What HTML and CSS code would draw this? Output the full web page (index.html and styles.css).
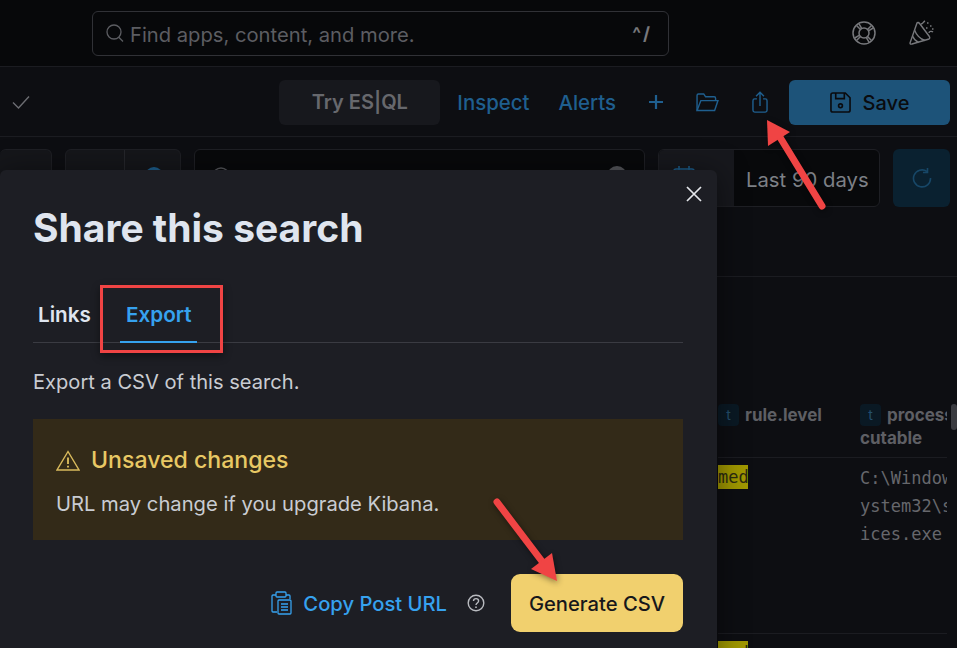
FILE: index.html
```html
<!DOCTYPE html>
<html lang="en">
<head>
  <meta charset="UTF-8">
  <title>Share this search</title>
  <link rel="stylesheet" href="styles.css">
</head>
<body>
  <!-- Global header -->
  <header class="topbar">
    <div class="global-search">
      <svg class="search-icon" width="20" height="20" viewBox="0 0 20 20" fill="none" stroke="currentColor" stroke-width="1.3"><circle cx="9" cy="9" r="7"/><path d="M13.8 14.2 L18 18.5"/></svg>
      <span class="search-hint">Find apps, content, and more.</span>
      <span class="shortcut">^/</span>
    </div>
    <div class="top-icons">
      <svg width="26" height="26" viewBox="0 0 26 26" fill="none" stroke="currentColor" stroke-width="1.5"><circle cx="13" cy="13" r="11"/><circle cx="13" cy="13" r="5"/><path d="M5.5 5.5 L9.5 9.5 M8 3.8 L10.8 8.6 M20.5 5.5 L16.5 9.5 M22.2 8 L17.4 10.8 M5.5 20.5 L9.5 16.5 M3.8 18 L8.6 15.2 M20.5 20.5 L16.5 16.5 M18 22.2 L15.2 17.4"/></svg>
      <svg width="26" height="26" viewBox="0 0 26 26" fill="none" stroke="currentColor" stroke-width="1.4"><path d="M9 3 L2 23 Q2 24.5 4 24 L21 19 Q22.5 18 21 16 L12 4 Q10 1.5 9 3 Z"/><path d="M6.5 10 C8 14 12 19 17 20.5 M4.5 16 C5.5 18.5 7.5 21 10.5 22.5"/><path d="M13 4 C15 4 15 2 17 1 M21 13 C21 11 24 11 25 12"/><path d="M19 3 h1.5 M22 6 h1.5 M18 8 h1.5 M24 9 h1.5" stroke-width="1.6"/></svg>
    </div>
  </header>

  <!-- App toolbar -->
  <div class="toolbar">
    <svg class="check" width="20" height="16" viewBox="0 0 20 16" fill="none" stroke="currentColor" stroke-width="1.4"><path d="M2 8.5 L7.5 14 L18 2.5"/></svg>
    <div class="toolbar-right">
      <button class="try-btn">Try ES|QL</button>
      <span class="tool-link link-inspect">Inspect</span>
      <span class="tool-link link-alerts">Alerts</span>
      <svg class="tool-icon icon-plus" width="16" height="16" viewBox="0 0 16 16" fill="none" stroke="currentColor" stroke-width="2.2"><path d="M8 1 V15 M1 8 H15"/></svg>
      <svg class="tool-icon icon-folder" width="23" height="19" viewBox="0 0 24 20" fill="none" stroke="currentColor" stroke-width="1.5"><path d="M1 18.5 V2.5 Q1 1 2.5 1 H8 L10 4 H19 Q20.5 4 20.5 5.5 V8"/><path d="M1 18.5 L5 8 H23 L19.5 18.5 Z"/></svg>
      <svg class="tool-icon icon-share" width="16" height="22" viewBox="0 0 18 25" fill="none" stroke="currentColor" stroke-width="1.6"><path d="M5.5 9 H3 Q1 9 1 11 V22 Q1 24 3 24 H15 Q17 24 17 22 V11 Q17 9 15 9 H12.5"/><path d="M9 17 V1.5 M4.5 6 L9 1.5 L13.5 6"/></svg>
      <button class="save-btn">
        <svg width="21" height="21" viewBox="0 0 22 22" fill="none" stroke="currentColor" stroke-width="1.7"><path d="M1 3 Q1 1 3 1 H16 L21 6 V19 Q21 21 19 21 H3 Q1 21 1 19 Z"/><path d="M6 1 V7 H15 V1"/><circle cx="11" cy="14.5" r="2"/></svg>
        <span>Save</span>
      </button>
    </div>
  </div>

  <!-- Filter row, mostly behind the modal -->
  <div class="filters">
    <div class="filter-box box-a"></div>
    <div class="filter-box box-b"><span class="box-b-split"><i class="blue-dot"></i></span></div>
    <div class="query-box">
      <svg class="query-icon" width="20" height="20" viewBox="0 0 20 20" fill="none" stroke="currentColor" stroke-width="1.4"><circle cx="10" cy="10" r="8"/></svg>
      <i class="grey-dot"></i>
    </div>
    <div class="date-box">
      <div class="date-icon">
        <svg width="22" height="22" viewBox="0 0 22 22" fill="none" stroke="currentColor" stroke-width="1.5"><rect x="1" y="4" width="20" height="17" rx="2"/><path d="M1 9 H21 M6 1 V6 M16 1 V6"/></svg>
      </div>
      <span class="date-text">Last 90 days</span>
    </div>
    <div class="refresh-btn">
      <svg width="20" height="20" viewBox="0 0 20 20" fill="none" stroke="currentColor" stroke-width="1.6"><path d="M15 3.5 A8.5 8.5 0 1 0 18.5 10"/><path d="M15.5 0 V4.5 H11"/></svg>
    </div>
  </div>

  <!-- Results table -->
  <section class="results">
    <div class="table-wrap">
      <div class="table-head">
        <div class="th th-level"><span class="type-badge">t</span><span>rule.level</span></div>
        <div class="th th-proc">
          <div class="th-proc-top"><span class="type-badge">t</span><span>process.exe</span></div>
          <div>cutable</div>
        </div>
      </div>
      <div class="table-row">
        <div class="td-level"><mark class="hl">med</mark></div>
        <div class="td-proc">C:\Windows\s<br>ystem32\serv<br>ices.exe</div>
      </div>
      <div class="table-row">
        <div class="td-level"><mark class="hl">med</mark></div>
      </div>
    </div>
    <div class="scroll-thumb"></div>
  </section>

  <!-- Share modal -->
  <div class="modal">
    <svg class="modal-close" width="16" height="16" viewBox="0 0 16 16" fill="none" stroke="currentColor" stroke-width="1.7"><path d="M1 1 L15 15 M15 1 L1 15"/></svg>
    <h1 class="modal-title">Share this search</h1>
    <div class="tabs">
      <span class="tab">Links</span>
      <span class="tab tab-active">Export</span>
    </div>
    <p class="modal-desc">Export a CSV of this search.</p>
    <div class="callout">
      <div class="callout-title">
        <svg width="24" height="21" viewBox="0 0 24 21" fill="none" stroke="currentColor" stroke-width="1.4"><path d="M12 1.5 L23 20 H1 Z"/><path d="M12 7.5 V14 M12 15.8 V17.6" stroke-width="1.9"/></svg>
        <span>Unsaved changes</span>
      </div>
      <p class="callout-body">URL may change if you upgrade Kibana.</p>
    </div>
    <div class="modal-footer">
      <svg class="clip-icon" width="21" height="24" viewBox="0 0 21 24" fill="none" stroke="currentColor" stroke-width="1.3"><path d="M5 4 H2 Q1 4 1 5 V20 Q1 21 2 21 H6"/><path d="M15 4 H18 Q19 4 19 5 V8"/><rect x="5" y="1" width="10" height="5" rx="1"/><rect x="7" y="9" width="13" height="14" rx="1"/><path d="M10 13 H17 M10 16 H17 M10 19 H17"/></svg>
      <span class="copy-link">Copy Post URL</span>
      <svg class="help-icon" width="18" height="18" viewBox="0 0 18 18" fill="none" stroke="currentColor" stroke-width="1.4"><circle cx="9" cy="9" r="7.8"/><path d="M6.5 7 C6.5 3.8 11.6 3.8 11.6 7 C11.6 9 9 9 9 11"/><path d="M9 12.4 V14" stroke-width="1.6"/></svg>
      <button class="generate-btn">Generate CSV</button>
    </div>
  </div>

  <!-- Red annotations on top of the screenshot -->
  <div class="mark-box"></div>
  <svg class="arrows" width="957" height="648" viewBox="0 0 957 648">
    <path d="M822 206 L778 134" stroke="#f04444" stroke-width="7" stroke-linecap="round" fill="none"/>
    <path d="M767 120 L790 132 L768 146 Z" fill="#f04444"/>
    <path d="M497 502 L544 564" stroke="#f04444" stroke-width="7" stroke-linecap="round" fill="none"/>
    <path d="M557 581 L531 569 L552 553 Z" fill="#f04444"/>
  </svg>
</body>
</html>
```

FILE: styles.css
```css
* {
  margin: 0;
  padding: 0;
  box-sizing: border-box;
}

body {
  position: relative;
  width: 957px;
  height: 648px;
  overflow: hidden;
  background-color: #0d0e12;
  font-family: Inter, 'Liberation Sans', sans-serif;
  font-size: 20px;
  color: #dfe5ef;
}

button {
  font-family: inherit;
  border: none;
}

/* header */
.topbar {
  height: 67px;
  background-color: #07080a;
  border-bottom: 1px solid #1b1c21;
  display: flex;
  align-items: center;
  padding: 0 23px 0 92px;
}

.global-search {
  width: 577px;
  height: 45px;
  border: 1px solid #303136;
  border-radius: 6px;
  display: flex;
  align-items: center;
  padding: 0 16px 0 12px;
  color: #5c5d62;
}

.search-icon {
  margin-right: 5px;
}

.search-hint {
  flex: 1;
  font-size: 20.2px;
  padding-top: 2px;
}

.shortcut {
  font-size: 18px;
  font-weight: 700;
  letter-spacing: 2px;
  color: #77787c;
}

.top-icons {
  margin-left: auto;
  display: flex;
  gap: 31px;
  color: #77787c;
}

/* toolbar */
.toolbar {
  height: 70px;
  border-bottom: 1px solid #1b1c21;
  display: flex;
  align-items: center;
  padding: 1px 7px 0 11px;
}

.check {
  color: #6c6d72;
}

.toolbar-right {
  margin-left: auto;
  display: flex;
  align-items: center;
}

.try-btn {
  width: 161px;
  height: 45px;
  border-radius: 6px;
  background-color: #17181d;
  color: #67686d;
  font-size: 20px;
  font-weight: 600;
}

.tool-link {
  color: #1f5f8f;
  font-size: 20.4px;
  font-weight: 500;
}

.link-inspect {
  margin-left: 17px;
}

.link-alerts {
  margin-left: 29px;
}

.tool-icon {
  color: #1f5f8f;
}

.icon-plus {
  margin-left: 32px;
}

.icon-folder {
  margin-left: 32px;
}

.icon-share {
  margin-left: 33px;
}

.save-btn {
  margin-left: 21px;
  width: 161px;
  height: 45px;
  padding-top: 1px;
  border-radius: 6px;
  background-color: #1d5379;
  color: #0a0b0e;
  font-size: 20px;
  font-weight: 500;
  display: flex;
  align-items: center;
  justify-content: center;
  gap: 12px;
}

/* filters */
.filters {
  height: 140px;
  padding-top: 12px;
  display: flex;
  align-items: flex-start;
  gap: 13px;
  border-bottom: 1px solid #1b1c21;
  padding-right: 7px;
}

.filter-box {
  height: 58px;
  border: 1px solid #1e1f24;
  border-radius: 6px;
  background-color: #15161a;
}

.box-a {
  width: 52px;
  border-left: none;
}

.box-b {
  width: 116px;
  padding-left: 58px;
}

.box-b-split {
  display: block;
  height: 100%;
  border-left: 1px solid #25262b;
  padding: 17px 0 0 20px;
}

.blue-dot {
  display: block;
  width: 18px;
  height: 18px;
  border-radius: 50%;
  background-color: #1d5f8e;
}

.query-box {
  width: 451px;
  height: 58px;
  border: 1px solid #1e1f24;
  border-radius: 6px;
  background-color: #08090b;
  display: flex;
  justify-content: space-between;
  padding: 16px 17px 0 16px;
  color: #55565b;
}

.grey-dot {
  display: block;
  width: 20px;
  height: 20px;
  border-radius: 50%;
  background-color: #55565b;
}

.date-box {
  width: 222px;
  height: 58px;
  border: 1px solid #1e1f24;
  border-radius: 6px;
  background-color: #08090b;
  display: flex;
  align-items: center;
  overflow: hidden;
}

.date-icon {
  width: 75px;
  height: 100%;
  background-color: #17181d;
  color: #1d5f8e;
  padding: 15px 0 0 14px;
}

.date-text {
  margin-left: 12px;
  padding-top: 2px;
  font-size: 20.3px;
  color: #7d8086;
}

.refresh-btn {
  width: 57px;
  height: 58px;
  border-radius: 6px;
  background-color: #0a2130;
  color: #174767;
  display: flex;
  align-items: center;
  justify-content: center;
}

/* results table */
.results {
  position: relative;
  height: 371px;
  padding: 127px 10px 0 718px;
}

.table-wrap {
  height: 100%;
  overflow: hidden;
}

.table-head {
  display: flex;
  height: 54px;
  border-bottom: 1px solid #1b1c21;
  font-size: 17px;
  font-weight: 700;
  color: #5e5f64;
}

.th-level {
  width: 142px;
  flex-shrink: 0;
  display: flex;
  gap: 6px;
  line-height: 22px;
}

.th-proc {
  width: 87px;
  flex-shrink: 0;
  line-height: 23px;
  overflow: hidden;
}

.th-proc-top {
  display: flex;
  gap: 6px;
  white-space: nowrap;
}

.type-badge {
  flex-shrink: 0;
  width: 21px;
  height: 22px;
  border-radius: 4px;
  background-color: #0a1924;
  color: #244f6e;
  font-size: 14px;
  line-height: 22px;
  font-weight: 400;
  text-align: center;
}

.table-row {
  display: flex;
  height: 176px;
  border-bottom: 1px solid #1b1c21;
  padding-top: 7px;
  font-family: 'DejaVu Sans Mono', 'Liberation Mono', monospace;
  font-size: 17px;
  color: #66676c;
}

.td-level {
  width: 142px;
  flex-shrink: 0;
}

.hl {
  display: block;
  width: 30px;
  height: 24px;
  line-height: 24px;
  background-color: #a09800;
  color: #2c2c10;
  font-size: 17px;
  overflow: hidden;
}

.td-proc {
  width: 87px;
  flex-shrink: 0;
  margin-top: -1px;
  line-height: 28px;
  white-space: nowrap;
  overflow: hidden;
}

.scroll-thumb {
  position: absolute;
  right: 0;
  top: 127px;
  width: 6px;
  height: 26px;
  border-radius: 3px;
  background-color: #3a3b40;
}

/* modal */
.modal {
  position: absolute;
  left: 0;
  top: 170px;
  width: 717px;
  height: 490px;
  background-color: #1d1e24;
  border-radius: 6px 6px 0 0;
  box-shadow: 0 4px 30px rgba(0, 0, 0, 0.5);
  padding: 34px 34px 0 33px;
}

.modal-close {
  position: absolute;
  right: 15px;
  top: 16px;
  color: #e4e6ea;
}

.modal-title {
  font-size: 39px;
  line-height: 48px;
  font-weight: 700;
  color: #dfe5ef;
}

.tabs {
  margin-top: 37px;
  height: 54px;
  padding-left: 5px;
  display: flex;
  gap: 35px;
  border-bottom: 1px solid #3a3b42;
  font-size: 20.7px;
  font-weight: 600;
  line-height: 52px;
  color: #dfe5ef;
}

.tab-active {
  position: relative;
  color: #36a2ef;
}

/* underline sticks out past the label */
.tab-active::after {
  content: "";
  position: absolute;
  left: -6px;
  right: -5px;
  bottom: -1px;
  height: 2px;
  background-color: #36a2ef;
}

.modal-desc {
  margin-top: 24px;
  font-size: 20.1px;
  line-height: 30px;
  color: #c9ccd2;
}

.callout {
  margin-top: 22px;
  height: 121px;
  background-color: #332a18;
  padding: 24px 23px 0;
}

.callout-title {
  display: flex;
  align-items: center;
  gap: 11px;
  font-size: 23.1px;
  line-height: 34px;
  font-weight: 500;
  color: #e8c864;
}

.callout-title svg {
  color: #d9ba5c;
}

.callout-body {
  margin-top: 13px;
  font-size: 20.2px;
  line-height: 28px;
  color: #c9ccd2;
}

.modal-footer {
  margin-top: 34px;
  display: flex;
  align-items: center;
  justify-content: flex-end;
}

.clip-icon {
  color: #36a2ef;
}

.copy-link {
  margin-left: 11px;
  font-size: 20.2px;
  font-weight: 500;
  color: #36a2ef;
}

.help-icon {
  margin-left: 20px;
  color: #b9bbc0;
}

.generate-btn {
  margin-left: 26px;
  width: 172px;
  height: 58px;
  border-radius: 9px;
  background-color: #f1d06e;
  color: #16171b;
  font-size: 20.2px;
  font-weight: 500;
}

/* annotations */
.mark-box {
  position: absolute;
  left: 100px;
  top: 285px;
  width: 123px;
  height: 68px;
  border: 3px solid #f04444;
  box-shadow: 0 3px 8px rgba(0, 0, 0, 0.45);
}

.arrows {
  position: absolute;
  left: 0;
  top: 0;
  pointer-events: none;
  filter: drop-shadow(1px 2px 3px rgba(0, 0, 0, 0.45));
}
```
